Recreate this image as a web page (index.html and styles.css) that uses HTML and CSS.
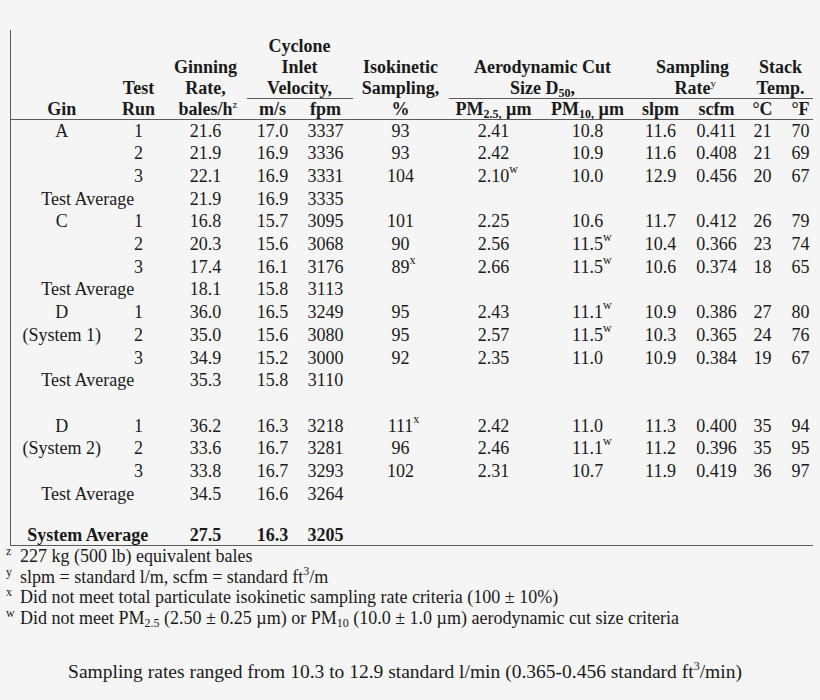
FILE: index.html
```html
<!DOCTYPE html>
<html lang="en">
<head>
    <meta charset="UTF-8">
    <meta name="viewport" content="width=device-width, initial-scale=1.0">
    <title>Cyclone Sampling Results</title>
    <link rel="stylesheet" href="styles.css">
</head>
<body>
    <table class="results">
        <colgroup>
            <col class="c-gin">
            <col class="c-run">
            <col class="c-rate">
            <col class="c-ms">
            <col class="c-fpm">
            <col class="c-iso">
            <col class="c-pm25">
            <col class="c-pm10">
            <col class="c-slpm">
            <col class="c-scfm">
            <col class="c-degc">
            <col class="c-degf">
        </colgroup>
        <thead>
            <tr class="h-row1">
                <th></th><th></th><th></th>
                <th colspan="2">Cyclone</th>
                <th></th><th colspan="2"></th><th colspan="2"></th><th colspan="2"></th>
            </tr>
            <tr class="h-row2">
                <th></th><th></th>
                <th>Ginning</th>
                <th colspan="2">Inlet</th>
                <th>Isokinetic</th>
                <th colspan="2">Aerodynamic Cut</th>
                <th colspan="2">Sampling</th>
                <th colspan="2">Stack</th>
            </tr>
            <tr class="h-row3">
                <th></th>
                <th>Test</th>
                <th>Rate,</th>
                <th colspan="2" class="under">Velocity,</th>
                <th>Sampling,</th>
                <th colspan="2" class="under">Size D<sub>50</sub>,</th>
                <th colspan="2" class="under">Rate<sup class="mark">y</sup></th>
                <th colspan="2" class="under">Temp.</th>
            </tr>
            <tr class="h-row4">
                <th>Gin</th>
                <th>Run</th>
                <th>bales/h<sup class="mark">z</sup></th>
                <th>m/s</th>
                <th>fpm</th>
                <th>%</th>
                <th>PM<sub>2.5,</sub> µm</th>
                <th>PM<sub>10,</sub> µm</th>
                <th>slpm</th>
                <th>scfm</th>
                <th>°C</th>
                <th class="last">°F</th>
            </tr>
        </thead>
        <tbody>
            <tr><td>A</td><td>1</td><td>21.6</td><td>17.0</td><td>3337</td><td>93</td><td>2.41</td><td>10.8</td><td>11.6</td><td>0.411</td><td>21</td><td class="last">70</td></tr>
            <tr><td></td><td>2</td><td>21.9</td><td>16.9</td><td>3336</td><td>93</td><td>2.42</td><td>10.9</td><td>11.6</td><td>0.408</td><td>21</td><td class="last">69</td></tr>
            <tr><td></td><td>3</td><td>22.1</td><td>16.9</td><td>3331</td><td>104</td><td>2.10<sup class="mark">w</sup></td><td>10.0</td><td>12.9</td><td>0.456</td><td>20</td><td class="last">67</td></tr>
            <tr><td colspan="2">Test Average</td><td>21.9</td><td>16.9</td><td>3335</td><td></td><td></td><td></td><td></td><td></td><td></td><td></td></tr>

            <tr><td>C</td><td>1</td><td>16.8</td><td>15.7</td><td>3095</td><td>101</td><td>2.25</td><td>10.6</td><td>11.7</td><td>0.412</td><td>26</td><td class="last">79</td></tr>
            <tr><td></td><td>2</td><td>20.3</td><td>15.6</td><td>3068</td><td>90</td><td>2.56</td><td>11.5<sup class="mark">w</sup></td><td>10.4</td><td>0.366</td><td>23</td><td class="last">74</td></tr>
            <tr><td></td><td>3</td><td>17.4</td><td>16.1</td><td>3176</td><td>89<sup class="mark">x</sup></td><td>2.66</td><td>11.5<sup class="mark">w</sup></td><td>10.6</td><td>0.374</td><td>18</td><td class="last">65</td></tr>
            <tr><td colspan="2">Test Average</td><td>18.1</td><td>15.8</td><td>3113</td><td></td><td></td><td></td><td></td><td></td><td></td><td></td></tr>

            <tr><td>D</td><td>1</td><td>36.0</td><td>16.5</td><td>3249</td><td>95</td><td>2.43</td><td>11.1<sup class="mark">w</sup></td><td>10.9</td><td>0.386</td><td>27</td><td class="last">80</td></tr>
            <tr><td>(System 1)</td><td>2</td><td>35.0</td><td>15.6</td><td>3080</td><td>95</td><td>2.57</td><td>11.5<sup class="mark">w</sup></td><td>10.3</td><td>0.365</td><td>24</td><td class="last">76</td></tr>
            <tr><td></td><td>3</td><td>34.9</td><td>15.2</td><td>3000</td><td>92</td><td>2.35</td><td>11.0</td><td>10.9</td><td>0.384</td><td>19</td><td class="last">67</td></tr>
            <tr><td colspan="2">Test Average</td><td>35.3</td><td>15.8</td><td>3110</td><td></td><td></td><td></td><td></td><td></td><td></td><td></td></tr>
            <tr><td colspan="12"></td></tr>

            <tr><td>D</td><td>1</td><td>36.2</td><td>16.3</td><td>3218</td><td>111<sup class="mark">x</sup></td><td>2.42</td><td>11.0</td><td>11.3</td><td>0.400</td><td>35</td><td class="last">94</td></tr>
            <tr><td>(System 2)</td><td>2</td><td>33.6</td><td>16.7</td><td>3281</td><td>96</td><td>2.46</td><td>11.1<sup class="mark">w</sup></td><td>11.2</td><td>0.396</td><td>35</td><td class="last">95</td></tr>
            <tr><td></td><td>3</td><td>33.8</td><td>16.7</td><td>3293</td><td>102</td><td>2.31</td><td>10.7</td><td>11.9</td><td>0.419</td><td>36</td><td class="last">97</td></tr>
            <tr><td colspan="2">Test Average</td><td>34.5</td><td>16.6</td><td>3264</td><td></td><td></td><td></td><td></td><td></td><td></td><td></td></tr>
            <tr class="spacer"><td colspan="12"></td></tr>

            <tr class="total"><td colspan="2">System Average</td><td>27.5</td><td>16.3</td><td>3205</td><td></td><td></td><td></td><td></td><td></td><td></td><td></td></tr>
        </tbody>
    </table>

    <div class="notes">
        <p><sup class="fn">z</sup>227 kg (500 lb) equivalent bales</p>
        <p><sup class="fn">y</sup>slpm = standard l/m, scfm = standard ft<sup class="pow">3</sup>/m</p>
        <p><sup class="fn">x</sup>Did not meet total particulate isokinetic sampling rate criteria (100 ± 10%)</p>
        <p><sup class="fn">w</sup>Did not meet PM<sub>2.5</sub> (2.50 ± 0.25 µm) or PM<sub>10</sub> (10.0 ± 1.0 µm) aerodynamic cut size criteria</p>
    </div>

    <p class="caption">Sampling rates ranged from 10.3 to 12.9 standard l/min (0.365-0.456 standard ft<sup class="pow">3</sup>/min)</p>
</body>
</html>
```

FILE: styles.css
```css
* {
    box-sizing: border-box;
    margin: 0;
    padding: 0;
}

body {
    background-color: #f5f5f5;
    color: #1a1a1a;
    font-family: 'Liberation Serif', 'Times New Roman', serif;
    font-size: 18px;
}

/* main table */
.results {
    border-collapse: collapse;
    table-layout: fixed;
    width: 802px;
    margin: 30px 0 0 10px;
    border-left: 1px solid #5a5a5a;
}

.c-gin  { width: 102px; }
.c-run  { width: 52px; }
.c-rate { width: 82px; }
.c-ms   { width: 52px; }
.c-fpm  { width: 54px; }
.c-iso  { width: 96px; }
.c-pm25 { width: 90px; }
.c-pm10 { width: 98px; }
.c-slpm { width: 48px; }
.c-scfm { width: 64px; }
.c-degc { width: 28px; }
.c-degf { width: 36px; }

.results th,
.results td {
    padding: 0;
    text-align: center;
    white-space: nowrap;
    font-weight: normal;
}

.results th {
    font-weight: bold;
    vertical-align: bottom;
    line-height: 21px;
}

.h-row1 th { height: 27px; }
.h-row2 th { height: 21px; }
.h-row3 th { height: 20px; line-height: 19px; }
.h-row4 th { height: 21px; line-height: 20px; border-bottom: 1px solid #5a5a5a; }

.results th.under {
    border-bottom: 1px solid #5a5a5a;
}

.results .last {
    padding-left: 12px;
}

.results td {
    height: 22.7px;
    line-height: 22.7px;
}

.results tr.spacer td {
    height: 20px;
}

.results tr.total td {
    font-weight: bold;
    height: 20px;
    line-height: 20px;
    border-bottom: 1px solid #5a5a5a;
}

.results sub {
    font-size: 12px;
    vertical-align: -3px;
    line-height: 0;
}

/* note letters hang right of the value */
.mark {
    display: inline-block;
    width: 0;
    font-size: 12px;
    font-weight: normal;
    line-height: 0;
    vertical-align: 9px;
}

.results th .mark {
    font-size: 11px;
    vertical-align: 7px;
}

/* footnotes */
.notes {
    padding-left: 6px;
}

.notes p {
    line-height: 20.5px;
}

.fn {
    display: inline-block;
    width: 14px;
    font-size: 12px;
    line-height: 0;
    vertical-align: 7px;
}

.pow {
    font-size: 12px;
    line-height: 0;
    vertical-align: 8px;
}

.notes sub {
    font-size: 12px;
    line-height: 0;
    vertical-align: -3px;
}

.caption {
    margin-top: 32px;
    padding-right: 10px;
    text-align: center;
    font-size: 19.5px;
    line-height: 24px;
}
```
